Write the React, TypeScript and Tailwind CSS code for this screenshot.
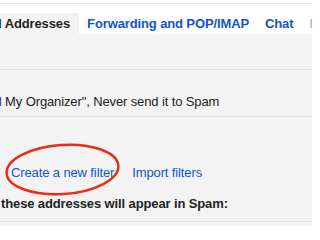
import React from 'react';

const tabs = [
    { label: 'Forwarding and POP/IMAP', color: 'text-[#1155cc]' },
    { label: 'Chat', color: 'text-[#1155cc]' },
    { label: 'Labs', color: 'text-[#cfa6dd]' },
];

export default function App() {
    return (
        <div className="relative w-[312px] h-[226px] overflow-hidden bg-[#f3f3f3] text-[13px] tracking-[-0.12px] text-[#222] font-['Liberation_Sans',Arial,sans-serif]">
            {/* Settings tab strip */}
            <div className="bg-white">
                <div className="h-[3px]" />
                <div className="h-px bg-[#e5e5e5]" />
                <div className="h-[9px]" />
                <div className="flex h-[21px] leading-[21px] font-bold whitespace-nowrap ml-[-124px]">
                    <div className="bg-[#f3f3f3] pl-2 pr-[9px] text-[#222]">Filters and Blocked Addresses</div>
                    {tabs.map((tab) => (
                        <div key={tab.label} className={`px-2 ${tab.color}`}>{tab.label}</div>
                    ))}
                </div>
            </div>

            {/* Filter list */}
            <div className="h-[36px] border-b border-[#e3e3e3]" />
            <div className="h-[47px] pt-[24px] leading-[15px] whitespace-nowrap border-b border-[#e3e3e3]">
                <span className="ml-[-92px]">Apply label "Mail My Organizer", Never send it to Spam</span>
            </div>

            <div className="pt-[48px] leading-[15px] flex gap-[18px] pl-[11px] whitespace-nowrap text-[#1155cc]">
                <a className="cursor-pointer">Create a new filter</a>
                <a className="cursor-pointer">Import filters</a>
            </div>
            <div className="mt-4 leading-[15px] pb-[10px] font-bold whitespace-nowrap border-b border-[#e3e3e3] pl-px">
                these addresses will appear in Spam:
            </div>

            {/* Hand-drawn highlight */}
            <svg className="absolute inset-0 pointer-events-none" width="312" height="226" viewBox="0 0 312 226">
                <ellipse
                    cx="62.5"
                    cy="169.5"
                    rx="56"
                    ry="24.5"
                    transform="rotate(-4 62.5 169.5)"
                    fill="none"
                    stroke="#ee2a18"
                    strokeWidth="2.5"
                />
            </svg>
        </div>
    );
}
